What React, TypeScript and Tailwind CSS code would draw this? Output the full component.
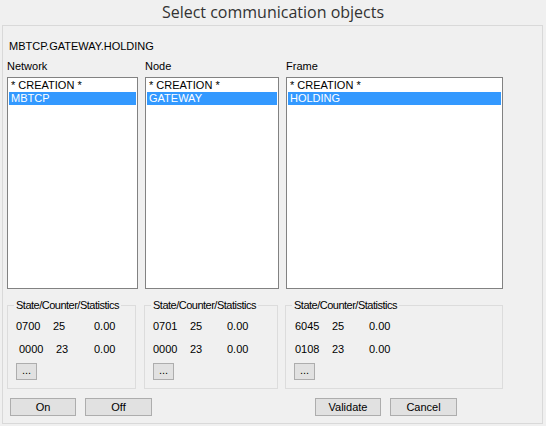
const lists = [
  { label: "Network", w: "w-[131px]", gw: "w-[129px]", item: "MBTCP" },
  { label: "Node", w: "w-[134px]", gw: "w-[134px]", item: "GATEWAY" },
  { label: "Frame", w: "w-[217px]", gw: "w-[218px]", item: "HOLDING" },
];

// state, counter, stats, decalage de la ligne, largeur colonne compteur
const stats = [
  [
    ["0700", "25", "0.00", "", "w-[41px]"],
    ["0000", "23", "0.00", "pl-[3px]", "w-[38px]"],
  ],
  [
    ["0701", "25", "0.00", "", "w-[37px]"],
    ["0000", "23", "0.00", "", "w-[37px]"],
  ],
  [
    ["6045", "25", "0.00", "pl-[1px]", "w-[37px]"],
    ["0108", "23", "0.00", "pl-[1px]", "w-[37px]"],
  ],
];

function WinButton({ children, className }: { children: React.ReactNode; className: string }) {
  return (
    <div
      className={`flex items-center justify-center border border-[#adadad] bg-[#e1e1e1] text-[11px] leading-none text-black ${className}`}
    >
      {children}
    </div>
  );
}

export default function App() {
  return (
    <div
      className="w-[546px] h-[426px] bg-[#f0f0f0] text-black overflow-hidden font-['Liberation_Sans',Arial,sans-serif]"
    >
      {/* Titre */}
      <div className="h-[25px] flex items-center justify-center pb-[2px]">
        <span className="text-[16px] text-[#333] font-['Open_Sans',sans-serif]">Select communication objects</span>
      </div>

      <div className="ml-[2px] w-[541px] h-[399px] border border-[#d9d9d9] pt-[14px]">
        <div className="pl-[6px] text-[11px] leading-[12px]">MBTCP.GATEWAY.HOLDING</div>

        {/* Listes */}
        <div className="flex mt-[8px] pl-[4px] gap-[6px]">
          {lists.map((l, i) => (
            <div key={l.label} className={`flex flex-col ${i === 0 ? "w-[131px] mr-[1px]" : ""} ${i === 2 ? "ml-[1px]" : ""}`}>
              <div className="text-[11px] leading-[12px]">{l.label}</div>
              <div className={`mt-[5px] h-[212px] ${l.w} bg-white border border-[#828282] p-[1px] text-[11px] leading-[13px]`}>
                <div className="px-[2px]">* CREATION *</div>
                <div className="px-[2px] bg-[#3399ff] text-white">{l.item}</div>
              </div>
            </div>
          ))}
        </div>

        {/* Statistiques */}
        <div className="flex mt-[10px] pl-[4px] gap-[8px]">
          {lists.map((l, i) => (
            <fieldset
              key={l.label}
              className={`${l.gw} min-w-0 h-[90px] border border-[#dcdcdc] pl-[8px] ${i === 2 ? "ml-[-1px]" : ""}`}
            >
              <legend className="ml-[-2px] px-[2px] text-[11px] leading-[12px] tracking-[-0.5px]">State/Counter/Statistics</legend>
              <div className="mt-[9px] text-[11px] leading-[12px]">
                {stats[i].map((r, j) => (
                  <div key={j} className={`flex ${j === 1 ? "mt-[11px]" : ""} ${r[3]}`}>
                    <span className="w-[37px]">{r[0]}</span>
                    <span className={r[4]}>{r[1]}</span>
                    <span>{r[2]}</span>
                  </div>
                ))}
              </div>
              <WinButton className="mt-[8px] w-[21px] h-[17px] pb-[3px]">...</WinButton>
            </fieldset>
          ))}
        </div>

        {/* Boutons */}
        <div className="flex mt-[9px] pl-[7px]">
          <WinButton className="w-[66px] h-[18px]">On</WinButton>
          <WinButton className="ml-[9px] w-[67px] h-[18px]">Off</WinButton>
          <WinButton className="ml-[163px] w-[66px] h-[18px]">Validate</WinButton>
          <WinButton className="ml-[9px] w-[67px] h-[18px]">Cancel</WinButton>
        </div>
      </div>
    </div>
  );
}
